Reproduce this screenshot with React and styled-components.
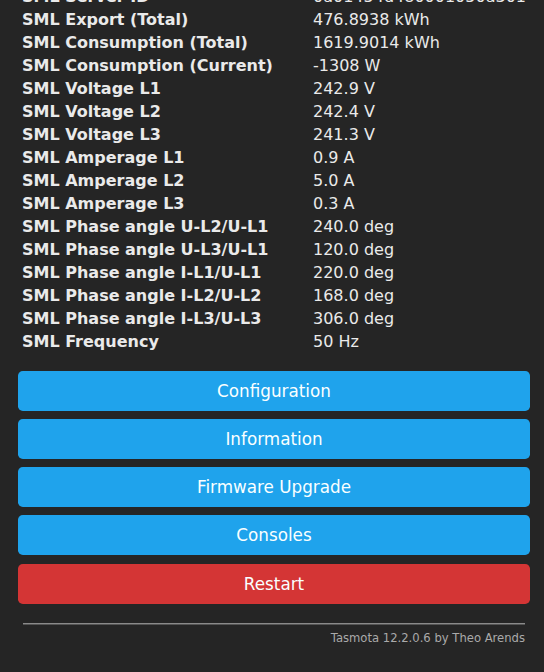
import React from "react";
import styled, { createGlobalStyle } from "styled-components";

const Global = createGlobalStyle`
  html, body {
    margin: 0;
    padding: 0;
    background: #252525;
    overflow: hidden;
  }
  body {
    font-family: "DejaVu Sans", Verdana, sans-serif;
  }
`;

const Page = styled.div`
  width: 512px;
  padding: 0 14px 0 18px;
  color: #eaeaea;
  display: flex;
  flex-direction: column;
`;

const Table = styled.div`
  display: grid;
  grid-template-columns: 291px 1fr;
  grid-auto-rows: 23px;
  margin-top: -15px;
  padding-left: 4px;
  font-size: 16px;
  line-height: 23px;
  white-space: nowrap;
`;

const Label = styled.div`
  font-weight: bold;
`;

const Value = styled.div`
  font-weight: normal;
`;

const Buttons = styled.div`
  display: flex;
  flex-direction: column;
  gap: 8px;
  margin-top: 18px;
`;

const Button = styled.button`
  display: block;
  width: 100%;
  height: 40px;
  border: 0;
  border-radius: 4.8px;
  background: ${(p) => (p.$danger ? "#d43535" : "#1fa3ec")};
  color: #faffff;
  font-family: "DejaVu Sans", Verdana, sans-serif;
  font-size: 16.8px;
  line-height: 40px;
  padding: 0;
  text-align: center;
  margin-top: ${(p) => (p.$danger ? "1px" : "0")};
`;

const Footer = styled.div`
  padding: 0 5px;
  margin-top: 19px;
  text-align: right;
`;

const Rule = styled.div`
  height: 0;
  border-top: 1px solid #8a8a8a;
  border-bottom: 1px solid #555;
`;

const Credit = styled.div`
  margin-top: 6px;
  font-size: 11.6px;
  color: #aaa;
`;

const rows = [
  ["SML Server ID", "0a01454d480001050a301"],
  ["SML Export (Total)", "476.8938 kWh"],
  ["SML Consumption (Total)", "1619.9014 kWh"],
  ["SML Consumption (Current)", "-1308 W"],
  ["SML Voltage L1", "242.9 V"],
  ["SML Voltage L2", "242.4 V"],
  ["SML Voltage L3", "241.3 V"],
  ["SML Amperage L1", "0.9 A"],
  ["SML Amperage L2", "5.0 A"],
  ["SML Amperage L3", "0.3 A"],
  ["SML Phase angle U-L2/U-L1", "240.0 deg"],
  ["SML Phase angle U-L3/U-L1", "120.0 deg"],
  ["SML Phase angle I-L1/U-L1", "220.0 deg"],
  ["SML Phase angle I-L2/U-L2", "168.0 deg"],
  ["SML Phase angle I-L3/U-L3", "306.0 deg"],
  ["SML Frequency", "50 Hz"],
];

export default function App() {
  return (
    <>
      <Global />
      <Page>
        <Table>
          {rows.map(([l, v]) => (
            <React.Fragment key={l}>
              <Label>{l}</Label>
              <Value>{v}</Value>
            </React.Fragment>
          ))}
        </Table>
        <Buttons>
          <Button>Configuration</Button>
          <Button>Information</Button>
          <Button>Firmware Upgrade</Button>
          <Button>Consoles</Button>
          <Button $danger>Restart</Button>
        </Buttons>
        <Footer>
          <Rule />
          <Credit>Tasmota 12.2.0.6 by Theo Arends</Credit>
        </Footer>
      </Page>
    </>
  );
}
